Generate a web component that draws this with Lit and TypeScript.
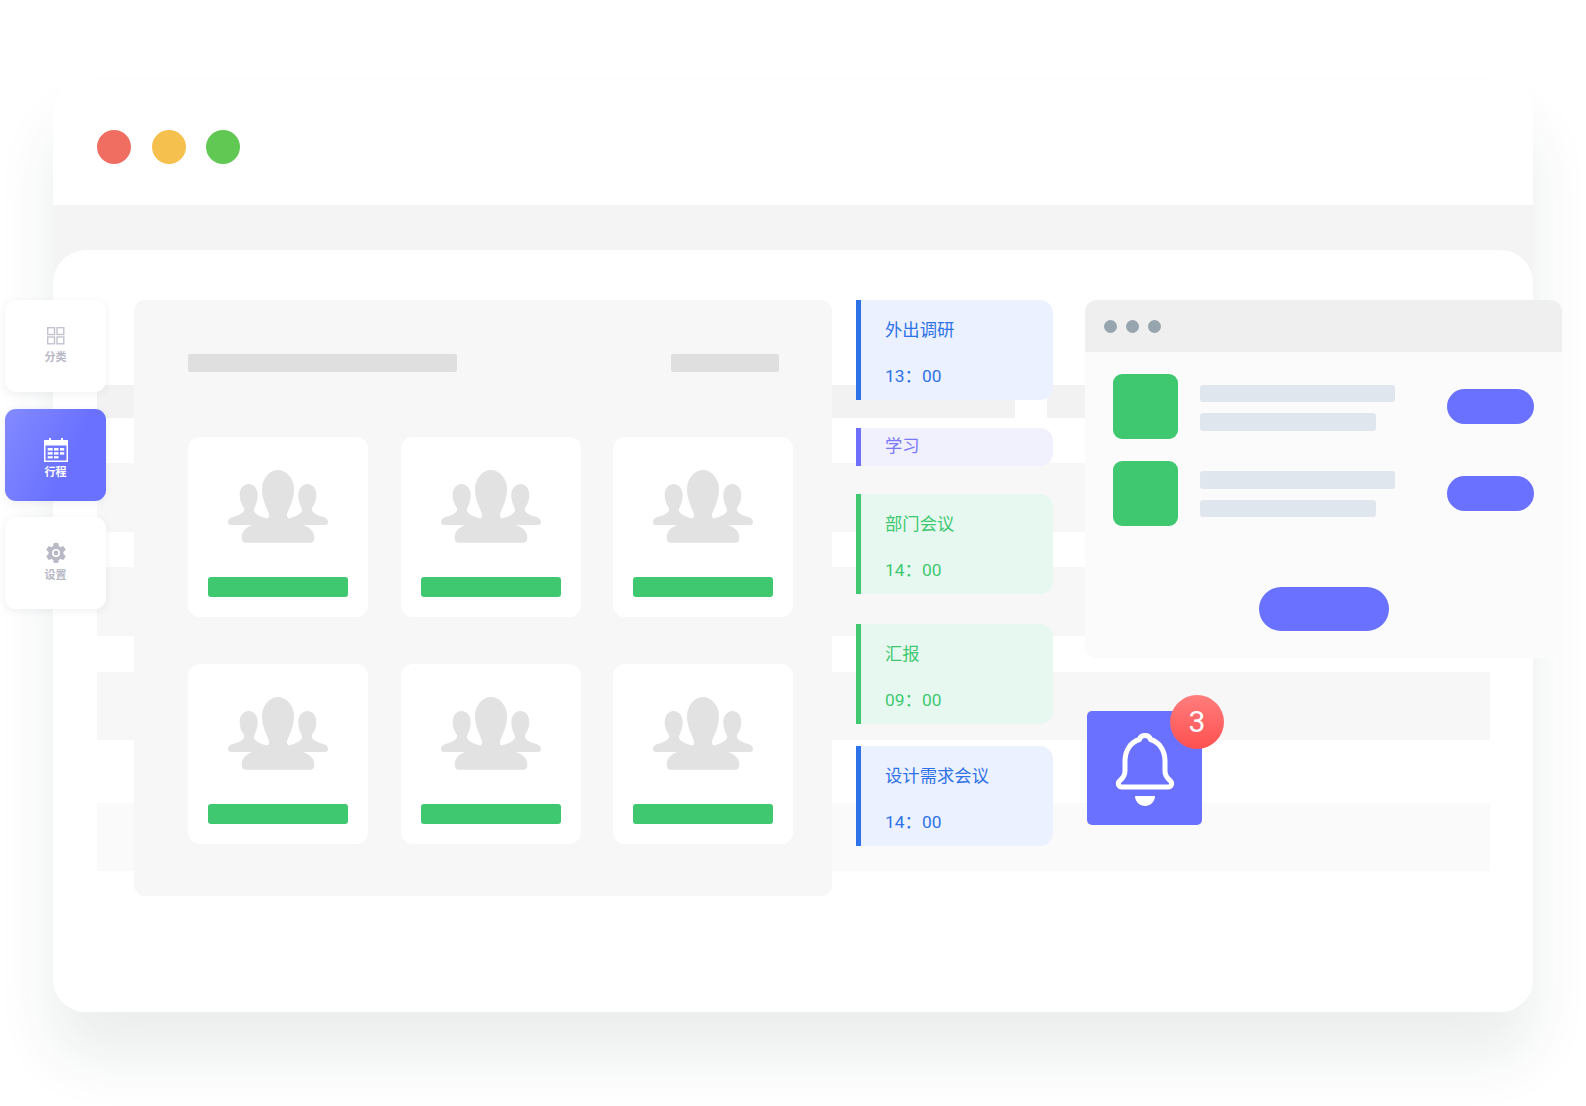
import { LitElement, html, css, svg } from "lit";
import { customElement } from "lit/decorators.js";

const side = "M20.7 14C15 14 11.7 19 11.7 25C11.7 31 14 35 16 38C17 42 13 44 8 46C3 47 0 49 0 52C0 54 1 55 3 55H30C34 55 37 54 38.5 52.5C40.5 51 40.5 49 39.5 48.5C34 47 27 45 25.7 40C27 36 29.7 32 29.7 25C29.7 19 26 14 20.7 14Z";
const people = svg`
  <path d="M50 0C42 0 34 8 34 19C34 30 39 38 41 44C42 49 36 52 28 54C20 55.5 14 60 13.7 67C13.5 71 15 72.7 18 72.7H82C85 72.7 86.5 71 86.3 67C86 60 80 56.5 72 54C64 52 58 49 59 44C61 38 66 30 66 19C66 8 58 0 50 0Z"/>
  <path d=${side} />
  <path transform="matrix(-1 0 0 1 100 0)" d=${side} />`;

type Item = { title: string; time?: string; kind: string; gap: number };
const schedule: Item[] = [
  { title: "外出调研", time: "13： 00", kind: "blue", gap: 0 },
  { title: "学习", kind: "purple", gap: 28 },
  { title: "部门会议", time: "14： 00", kind: "green", gap: 28 },
  { title: "汇报", time: "09： 00", kind: "green", gap: 30 },
  { title: "设计需求会议", time: "14： 00", kind: "blue", gap: 22 },
];

@customElement("app-root")
export class AppRoot extends LitElement {
  static styles = css`
    :host {
      display: block;
      width: 1586px;
      height: 1106px;
      overflow: hidden;
      background: #fff;
      padding: 80px 53px 0;
      box-sizing: border-box;
      font-family: Roboto, "Noto Sans CJK SC", sans-serif;
    }
    .shell {
      width: 1480px;
      height: 932px;
      background: #fff;
      border-radius: 33px;
      box-shadow: 0 45px 60px rgba(20, 55, 42, 0.085);
    }
    .top {
      height: 125px;
      box-sizing: border-box;
      padding: 8px 0 0 44px;
      display: flex;
      align-items: center;
      gap: 20.5px;
    }
    .light { width: 34px; height: 34px; border-radius: 50%; }
    .red { background: #f06e61; }
    .yellow { background: #f6c04f; }
    .lime { background: #62c854; }
    .band { height: 78px; margin-bottom: -33px; background: #f4f4f4; }
    .panel {
      position: relative;
      height: 762px;
      box-sizing: border-box;
      background: #fff;
      border-radius: 33px;
      padding: 135px 43px 0 44px;
    }
    .stripe { display: flex; gap: 32px; }
    .stripe i { display: block; background: #f7f7f7; height: 100%; border-radius: 1px; }
    .s-a { height: 33px; }
    .s-a i { background: #f2f2f2; }
    .s-a i:first-child { width: 918px; }
    .s-a i:last-child { flex: 1; }
    .s-b, .s-c { height: 69px; }
    .s-d { height: 68px; }
    .s-e { height: 68px; }
    .s-e i { background: #fafafa; }
    .s-b { margin-top: 45px; }
    .s-c { margin-top: 35px; }
    .s-d { margin-top: 36px; }
    .s-e { margin-top: 63px; }
    .stripe i:only-child { flex: 1; }

    .side {
      position: absolute;
      left: -48px;
      top: 50px;
      display: flex;
      flex-direction: column;
      gap: 16.5px;
    }
    .nav {
      width: 101px;
      height: 92px;
      border-radius: 11px;
      background: #fff;
      box-shadow: 0 2px 8px rgba(40, 50, 80, 0.07);
      display: flex;
      flex-direction: column;
      align-items: center;
      color: #b9b9c6;
      font-size: 11px;
      font-weight: 700;
      line-height: 14px;
    }
    .nav svg { display: block; }
    .nav span { font-family: "Noto Sans CJK SC", sans-serif; }
    .nav.grid { padding-top: 27px; box-sizing: border-box; gap: 4px; }
    .nav.cal {
      padding-top: 29px;
      box-sizing: border-box;
      gap: 2px;
      color: #fff;
      background: linear-gradient(115deg, #838aff 0%, #6a71ff 62%);
    }
    .nav.gear { padding-top: 26px; box-sizing: border-box; gap: 4px; }

    .layer {
      position: absolute;
      left: 81px;
      top: 50px;
      display: flex;
      align-items: flex-start;
    }
    .main {
      width: 698px;
      height: 596px;
      box-sizing: border-box;
      background: #f7f7f7;
      border-radius: 11px;
      padding: 54px 39px 0 54px;
    }
    .head {
      display: flex;
      justify-content: space-between;
      height: 18px;
      margin-right: 14px;
    }
    .head i { display: block; background: #dfdfdf; border-radius: 2px; }
    .head i:first-child { width: 269px; }
    .head i:last-child { width: 108px; }
    .tiles {
      margin-top: 65px;
      display: grid;
      grid-template-columns: repeat(3, 180px);
      column-gap: 32.5px;
      row-gap: 47px;
    }
    .tile {
      height: 180px;
      background: #fff;
      border-radius: 12px;
      padding-top: 33px;
      box-sizing: border-box;
      display: flex;
      flex-direction: column;
      align-items: center;
    }
    .tile svg { display: block; fill: #e2e2e2; }
    .tile b {
      display: block;
      width: 140px;
      height: 20px;
      margin-top: 33.5px;
      background: #40c870;
      border-radius: 3px;
    }

    .sched { width: 197px; margin-left: 24px; flex: none; }
    .ev {
      box-sizing: border-box;
      height: 100px;
      padding: 15.5px 0 0 24px;
      border-left: 5px solid;
      border-radius: 0 13px 13px 0;
      font-size: 17.33px;
      line-height: 26px;
      font-family: "Noto Sans CJK SC", sans-serif;
    }
    .ev.single { height: 38px; padding-top: 4px; }
    .ev .t {
      margin-top: 21px;
      font-family: Roboto, "Noto Sans CJK SC", sans-serif;
      word-spacing: -4px;
    }
    .blue { background: #ebf1fe; border-color: #2e72ea; color: #2f72e8; }
    .purple { background: #f1f0fd; border-color: #6e6ffd; color: #7b78fa; }
    .green { background: #e7f8f0; border-color: #40c870; color: #40c870; }

    .right { width: 477px; margin-left: 32px; flex: none; }
    .win {
      height: 358px;
      background: #fbfbfb;
      border-radius: 12px;
      overflow: hidden;
    }
    .win-head {
      height: 52px;
      background: #efefef;
      padding-left: 18.5px;
      display: flex;
      align-items: center;
      gap: 9px;
    }
    .win-head i { width: 13px; height: 13px; border-radius: 50%; background: #97a5ae; }
    .rows {
      padding: 22px 28px 0;
      display: flex;
      flex-direction: column;
      gap: 21.5px;
    }
    .row { display: flex; align-items: center; }
    .sq { width: 65px; height: 65px; border-radius: 9px; background: #40c870; }
    .lines {
      margin: 2px 0 0 22px;
      display: flex;
      flex-direction: column;
      gap: 11px;
    }
    .lines i { display: block; height: 17.5px; background: #e0e6ed; border-radius: 3px; }
    .lines i:first-child { width: 195px; }
    .lines i:last-child { width: 176px; }
    .pill { background: #6a71ff; border-radius: 22px; }
    .row .pill { width: 87px; height: 35px; margin-left: auto; }
    .big { width: 130px; height: 44px; margin: 61px auto 0; }

    .bell {
      position: relative;
      width: 115px;
      height: 114px;
      margin: 53px 0 0 2px;
      background: #6a71ff;
      border-radius: 5px;
    }
    .bell svg { display: block; }
    .badge {
      position: absolute;
      left: 83px;
      top: -16px;
      width: 54px;
      height: 54px;
      border-radius: 50%;
      background: linear-gradient(180deg, #ff7d7d 0%, #ff5050 100%);
      color: #fff;
      font-size: 30px;
      line-height: 54px;
      text-align: center;
    }
  `;

  render() {
    const tile = html`<div class="tile">
      <svg width="100" height="73" viewBox="0 0 100 73">${people}</svg><b></b>
    </div>`;
    const row = html`<div class="row">
      <div class="sq"></div>
      <div class="lines"><i></i><i></i></div>
      <div class="pill"></div>
    </div>`;
    return html`
      <div class="shell">
        <div class="top">
          <div class="light red"></div>
          <div class="light yellow"></div>
          <div class="light lime"></div>
        </div>
        <div class="band"></div>
        <div class="panel">
          <div class="stripe s-a"><i></i><i></i></div>
          <div class="stripe s-b"><i></i></div>
          <div class="stripe s-c"><i></i></div>
          <div class="stripe s-d"><i></i></div>
          <div class="stripe s-e"><i></i></div>

          <div class="layer">
            <div class="main">
              <div class="head"><i></i><i></i></div>
              <div class="tiles">${tile}${tile}${tile}${tile}${tile}${tile}</div>
            </div>
            <div class="sched">
              ${schedule.map(
                (e) => html`<div
                  class="ev ${e.kind} ${e.time ? "" : "single"}"
                  style="margin-top:${e.gap}px"
                >
                  <div>${e.title}</div>
                  ${e.time ? html`<div class="t">${e.time}</div>` : ""}
                </div>`
              )}
            </div>
            <div class="right">
              <div class="win">
                <div class="win-head"><i></i><i></i><i></i></div>
                <div class="rows">${row}${row}</div>
                <div class="pill big"></div>
              </div>
              <div class="bell">
                <svg width="115" height="114" viewBox="0 0 115 114">
                  <path
                    d="M58 24.5C55 24.5 53 26.5 52.5 28.5C44 31 38 39 38 50V60C38 65 36 67 33 69.5C30 72 31.5 76 35 76H81C84.5 76 86 72 83 69.5C80 67 78 65 78 60V50C78 39 72 31 63.5 28.5C63 26.5 61 24.5 58 24.5Z"
                    fill="none"
                    stroke="#fff"
                    stroke-width="5"
                    stroke-linejoin="round"
                  />
                  <path d="M48 85H68C68 91 63 95 58 95C53 95 48 91 48 85Z" fill="#fff" />
                </svg>
                <div class="badge">3</div>
              </div>
            </div>
          </div>

          <div class="side">
            <div class="nav grid">
              <svg width="18" height="18" viewBox="0 0 18 18" fill="none" stroke="#c3c3cf" stroke-width="1.4">
                <rect x="0.7" y="0.7" width="6.8" height="6.8" />
                <rect x="10" y="0.7" width="6.8" height="6.8" />
                <rect x="0.7" y="10" width="6.8" height="6.8" />
                <rect x="10" y="10" width="6.8" height="6.8" />
              </svg>
              <span>分类</span>
            </div>
            <div class="nav cal">
              <svg width="24" height="24" viewBox="0 0 24 24" fill="#fff">
                <rect x="5" y="0" width="2" height="4" />
                <rect x="17" y="0" width="2" height="4" />
                <path fill-rule="evenodd" d="M0 2H24V24H0ZM1.5 7.5V22.5H22.5V7.5Z" />
                <rect x="3.7" y="10" width="5" height="2.6" />
                <rect x="10" y="10" width="4.5" height="2.6" />
                <rect x="16" y="10" width="4.2" height="2.6" />
                <rect x="3.7" y="14.2" width="5" height="2.4" />
                <rect x="10" y="14.2" width="4.5" height="2.4" />
                <rect x="16" y="14.2" width="4.2" height="2.4" />
                <rect x="3.7" y="18.2" width="5" height="2.2" />
                <rect x="10" y="18.2" width="4.5" height="2.2" />
              </svg>
              <span>行程</span>
            </div>
            <div class="nav gear">
              <svg width="20" height="20" viewBox="0 0 20 20">
                <g fill="#b9b9c6">
                  <circle cx="10" cy="10" r="7.6" />
                  ${[0, 60, 120, 180, 240, 300].map(
                    (a) => svg`<rect x="7.4" y="0" width="5.2" height="4.5" rx="1.2" transform="rotate(${a} 10 10)" />`
                  )}
                </g>
                <circle cx="10" cy="10" r="4" fill="#fff" />
                <circle cx="10" cy="10" r="2.4" fill="#b9b9c6" />
              </svg>
              <span>设置</span>
            </div>
          </div>
        </div>
      </div>
    `;
  }
}
